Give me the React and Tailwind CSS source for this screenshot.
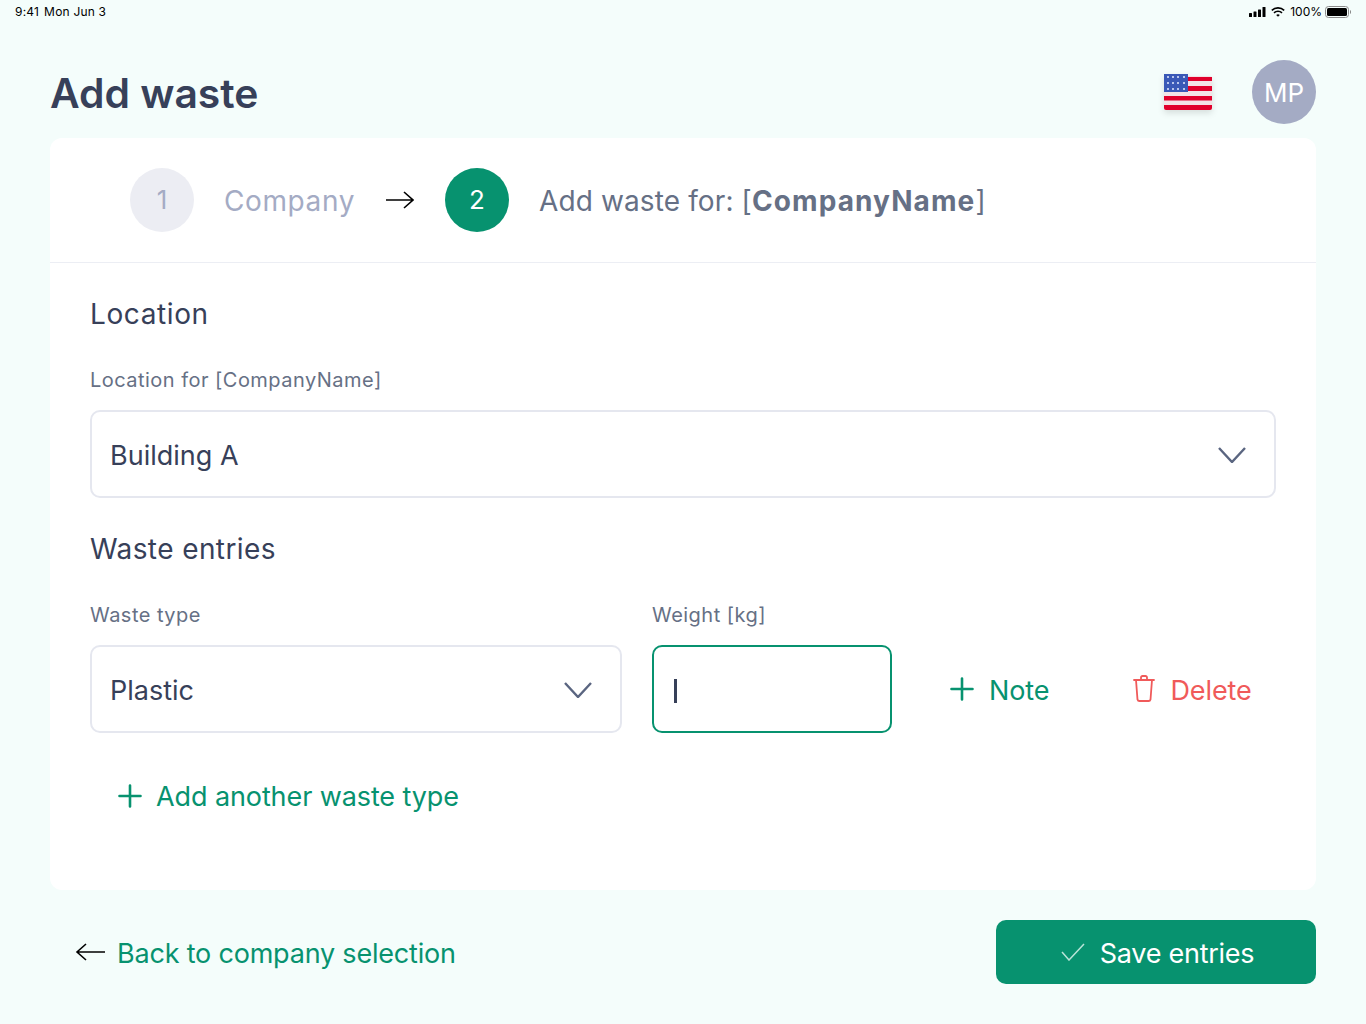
import React from 'react';

const font = { fontFamily: '"Inter", "Noto Sans", sans-serif' };

const Chevron = () => (
    <svg className="mt-0.5" width="28" height="16" viewBox="0 0 28 16" fill="none" stroke="#5a6580" strokeWidth="2.4">
        <path d="M1 1l13 14L27 1" />
    </svg>
);

const Plus = () => (
    <svg width="24" height="24" viewBox="0 0 24 24" fill="none" stroke="#07926f" strokeWidth="2.6" strokeLinecap="round">
        <path d="M12 1.500v21M1.500 12h21" />
    </svg>
);

const Flag = () => (
    <svg width="48" height="36" viewBox="0 0 48 36" className="drop-shadow-md">
        <rect x="0" y="2" width="48" height="34" rx="2" fill="#f3e3e6" />
        <rect x="0" y="3" width="48" height="4" fill="#e0002b" />
        <rect x="0" y="12" width="48" height="5" fill="#e0002b" />
        <rect x="0" y="22" width="48" height="4.5" fill="#e0002b" />
        <path d="M0 31h48v3a2 2 0 0 1-2 2H2a2 2 0 0 1-2-2z" fill="#e0002b" />
        <path d="M0 18V0h24v18z" fill="#3a59b7" />
        {[3, 9, 15].map((y) =>
            [4, 9, 14, 20].map((x) => <rect key={`${x}-${y}`} x={x - 1} y={y - 1} width="2" height="2" fill="#b9c6ec" />)
        )}
    </svg>
);

const StatusBar = () => (
    <div className="h-6 flex items-center justify-between pl-[15px] pr-[15px] text-[12px] text-black">
        <div className="flex gap-[5px] tracking-[0.2px]">
            <span>9:41</span>
            <span>Mon Jun 3</span>
        </div>
        <div className="flex items-center">
            <svg width="17" height="10" viewBox="0 0 17 10" fill="#000">
                <rect x="0" y="6" width="3" height="4" rx="0.5" />
                <rect x="4.5" y="4.5" width="3" height="5.5" rx="0.5" />
                <rect x="9" y="2.5" width="3" height="7.5" rx="0.5" />
                <rect x="13.5" y="0" width="3" height="10" rx="0.5" />
            </svg>
            <svg className="ml-[5px]" width="14" height="10" viewBox="0 0 14 10" fill="none" stroke="#000" strokeWidth="1.6">
                <path d="M0.8 3.4a9 9 0 0 1 12.4 0M3 5.8a5.8 5.8 0 0 1 8 0" />
                <path d="M5.2 8a2.6 2.6 0 0 1 3.6 0L7 9.8z" fill="#000" stroke="none" />
            </svg>
            <span className="ml-[5px]">100%</span>
            <svg className="ml-[3px]" width="26" height="12" viewBox="0 0 26 12">
                <rect x="0.5" y="0.5" width="23" height="11" rx="3" fill="none" stroke="#8b8b8b" />
                <rect x="2" y="2" width="20" height="8" rx="1.5" fill="#000" />
                <path d="M25 4v4a2 2 0 0 0 1-2 2 2 0 0 0-1-2z" fill="#8b8b8b" />
            </svg>
        </div>
    </div>
);

const Field = ({ label, children, className }) => (
    <div className={className}>
        <div className="h-6 leading-6 text-[20px] tracking-[0.47px] text-[#667085]">{label}</div>
        {children}
    </div>
);

const Select = ({ value }) => (
    <div className="mt-[18px] h-[88px] flex items-center justify-between pl-[18px] pr-[28px] bg-white border-2 border-[#e5e7ef] rounded-[10px]">
        <span className="pt-[5px] text-[27px] text-[#374059]">{value}</span>
        <Chevron />
    </div>
);

const App = () => {
    return (
        <div className="w-[1366px] h-[1024px] overflow-hidden bg-[#f4fdfb]" style={font}>
            <StatusBar />

            {/* Header */}
            <div className="h-[114px] flex items-start justify-between pl-[50px] pr-[50px] pt-[36px]">
                <h1 className="h-16 leading-[66px] text-[40.800px] font-semibold text-[#374059]">Add waste</h1>
                <div className="flex items-center gap-10">
                    <Flag />
                    <div className="w-16 h-16 rounded-full bg-[#a4abc4] flex items-center justify-center text-white text-[26px]">MP</div>
                </div>
            </div>

            {/* Card */}
            <div className="mx-[50px] h-[752px] bg-white rounded-xl">
                <div className="h-[125px] pl-20 pb-px flex items-center border-b border-[#eceef4]">
                    <div className="w-16 h-16 rounded-full bg-[#ecedf3] flex items-center justify-center text-[26px] text-[#a4abc4]">1</div>
                    <span className="ml-[30px] pt-0.5 w-[162px] text-[28px] tracking-[0.6px] text-[#a4abc4]">Company</span>
                    <svg width="28" height="18" viewBox="0 0 28 18" fill="none" stroke="#000" strokeWidth="1.6">
                        <path d="M0 9h27M18 1l9 8-9 8" />
                    </svg>
                    <div className="ml-[31px] w-16 h-16 rounded-full bg-[#07926f] flex items-center justify-center text-[26px] text-white">2</div>
                    <span className="ml-[30px] pt-0.5 text-[28px] tracking-[0.12px] text-[#667085]">
                        Add waste for: [<b className="font-bold tracking-[1.1px]">CompanyName</b>]
                    </span>
                </div>

                <div className="px-10 pt-[33px]">
                    <h2 className="h-9 leading-9 text-[28px] tracking-[0.6px] text-[#374059]">Location</h2>
                    <Field label="Location for [CompanyName]" className="mt-9">
                        <Select value="Building A" />
                    </Field>

                    <h2 className="mt-[33px] h-9 leading-9 text-[28px] tracking-[0.4px] text-[#374059]">Waste entries</h2>
                    <div className="mt-9 flex items-end">
                        <Field label="Waste type" className="w-[532px]">
                            <Select value="Plastic" />
                        </Field>
                        <Field label="Weight [kg]" className="ml-[30px] w-[240px]">
                            <div className="mt-[18px] h-[88px] flex items-center pl-5 bg-white border-2 border-[#07926f] rounded-[10px]">
                                <div className="w-[3px] h-6 mt-[4px] bg-[#374059]" />
                            </div>
                        </Field>
                        <div className="h-[88px] ml-[58px] flex items-center text-[27px] text-[#07926f]">
                            <Plus />
                            <span className="ml-[15px] pt-[5px] tracking-[-0.1px]">Note</span>
                        </div>
                        <div className="h-[88px] ml-[84px] flex items-center text-[27px] text-[#f05a5a]">
                            <svg width="22" height="28" viewBox="0 0 22 28" fill="none" stroke="#f05a5a" strokeWidth="1.8" strokeLinecap="round">
                                <path d="M1 5h20M8 5V2.5A1.5 1.5 0 0 1 9.500 1h3A1.500 1.500 0 0 1 14 2.500V5M3 5l1.500 19.500A2 2 0 0 0 6.500 26h9a2 2 0 0 0 2-1.500L19 5" />
                            </svg>
                            <span className="ml-[15px] pt-[5px] tracking-[-0.1px]">Delete</span>
                        </div>
                    </div>

                    <div className="mt-[45px] ml-7 h-9 flex items-center text-[27px] text-[#07926f]">
                        <Plus />
                        <span className="ml-[14px] pt-0.5 tracking-[-0.1px]">Add another waste type</span>
                    </div>
                </div>
            </div>

            {/* Footer */}
            <div className="mt-[30px] mx-[50px] flex items-center justify-between">
                <div className="ml-[25px] flex items-center text-[27px] text-[#07926f]">
                    <svg width="30" height="18" viewBox="0 0 30 18" fill="none" stroke="#000" strokeWidth="1.6">
                        <path d="M30 9H2M11 1L2 9l9 8" />
                    </svg>
                    <span className="ml-3 pt-[5px] tracking-[-0.2px]">Back to company selection</span>
                </div>
                <div className="w-80 h-16 pl-[3px] rounded-[10px] bg-[#07926f] flex items-center justify-center text-[27px] text-white">
                    <svg width="24" height="18" viewBox="0 0 24 18" fill="none" stroke="#b9e4d8" strokeWidth="1.5">
                        <path d="M1 9l7 8L23 1" />
                    </svg>
                    <span className="ml-[15px] pt-[5px] tracking-[-0.25px]">Save entries</span>
                </div>
            </div>
        </div>
    );
};

export default App;
